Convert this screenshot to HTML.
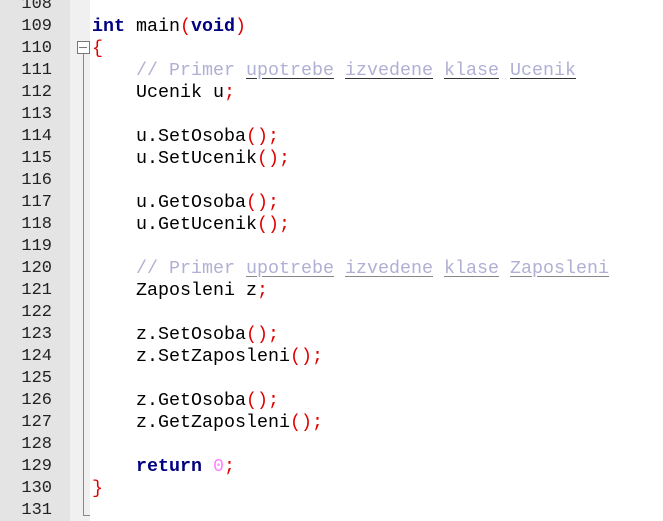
<!DOCTYPE html>
<html><head><style>
html,body{margin:0;padding:0;background:#fff;width:663px;height:521px;overflow:hidden;position:relative}
.g1{position:absolute;left:0;top:0;width:70px;height:521px;background:#e4e4e4}
.g2{position:absolute;left:70px;top:0;width:20px;height:521px;background:#f0f0f0}
.ln{position:absolute;left:0;width:52px;text-align:right;font-family:"Liberation Mono",monospace;font-size:17px;color:#222;line-height:22px}
.cd{position:absolute;left:92px;font-family:"Liberation Mono",monospace;font-size:18.33px;color:#000;line-height:22px;white-space:pre}
.k{color:#000080;font-weight:bold}
.p{color:#e00000}
.c{color:#b0b0d4}
.u{text-decoration:underline;text-decoration-color:#333;text-underline-offset:3px}
.u2{text-decoration:underline;text-decoration-color:#888;text-underline-offset:3px}
.n{color:#ff80ff}
</style></head><body>
<div class="g1"></div><div class="g2"></div>
<div style="position:absolute;left:77px;top:41px;width:11px;height:11px;border:1px solid #777;background:#fff"></div>
<div style="position:absolute;left:79px;top:47px;width:8px;height:1px;background:#777"></div>
<div style="position:absolute;left:83px;top:54px;width:1px;height:462px;background:#888"></div>
<div style="position:absolute;left:83px;top:515px;width:7px;height:1px;background:#888"></div>
<div class="ln" style="top:-6px">108<br>109<br>110<br>111<br>112<br>113<br>114<br>115<br>116<br>117<br>118<br>119<br>120<br>121<br>122<br>123<br>124<br>125<br>126<br>127<br>128<br>129<br>130<br>131</div>
<div class="cd" style="top:-6px">
<span class="k">int</span> main<span class="p">(</span><span class="k">void</span><span class="p">)</span>
<span class="p">{</span>
    <span class="c">// Primer <span class="u">upotrebe</span> <span class="u">izvedene</span> <span class="u">klase</span> <span class="u">Ucenik</span></span>
    Ucenik u<span class="p">;</span>

    u.SetOsoba<span class="p">();</span>
    u.SetUcenik<span class="p">();</span>

    u.GetOsoba<span class="p">();</span>
    u.GetUcenik<span class="p">();</span>

    <span class="c">// Primer <span class="u2">upotrebe</span> <span class="u2">izvedene</span> <span class="u2">klase</span> <span class="u2">Zaposleni</span></span>
    Zaposleni z<span class="p">;</span>

    z.SetOsoba<span class="p">();</span>
    z.SetZaposleni<span class="p">();</span>

    z.GetOsoba<span class="p">();</span>
    z.GetZaposleni<span class="p">();</span>

    <span class="k">return</span> <span class="n">0</span><span class="p">;</span>
<span class="p">}</span>
</div>
</body></html>
